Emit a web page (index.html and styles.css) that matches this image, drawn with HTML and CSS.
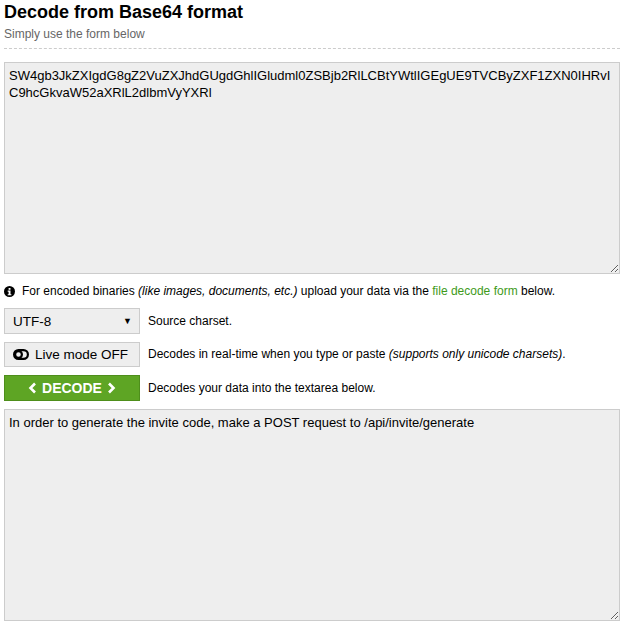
FILE: index.html
```html
<!DOCTYPE html>
<html>
<head>
<meta charset="utf-8">
<link rel="stylesheet" href="styles.css">
</head>
<body>
<div class="page">
  <h1 class="title">Decode from Base64 format</h1>
  <p class="subtitle">Simply use the form below</p>
  <div class="sep"></div>
  <textarea class="area area-in">SW4gb3JkZXIgdG8gZ2VuZXJhdGUgdGhlIGludml0ZSBjb2RlLCBtYWtlIGEgUE9TVCByZXF1ZXN0IHRvIC9hcGkvaW52aXRlL2dlbmVyYXRl</textarea>
  <p class="info">
    <svg class="info-icon" width="11" height="11" viewBox="0 0 11 11"><circle cx="5.5" cy="5.5" r="5.5" fill="#000"/><rect x="4.6" y="2" width="1.9" height="1.8" fill="#fff"/><path d="M3.7 4.6h2.8v3.6h0.9v1.1H3.7V8.2h0.9V5.7h-0.9z" fill="#fff"/></svg>
    <span>For encoded binaries <em>(like images, documents, etc.)</em> upload your data via the <a class="link" href="#">file decode form</a> below.</span>
  </p>
  <div class="rows">
    <div class="row">
      <div class="ctrl select"><span>UTF-8</span><span class="arrow">▼</span></div>
      <span class="label">Source charset.</span>
    </div>
    <div class="row">
      <div class="ctrl live">
        <svg width="16" height="11" viewBox="0 0 16 11"><rect x="1.1" y="1.1" width="13.8" height="8.8" rx="4.4" fill="none" stroke="#000" stroke-width="2.2"/><circle cx="5.5" cy="5.5" r="3.4" fill="#eee" stroke="#000" stroke-width="2.2"/></svg>
        <span>Live mode OFF</span>
      </div>
      <span class="label">Decodes in real-time when you type or paste <em>(supports only unicode charsets)</em>.</span>
    </div>
    <div class="row">
      <div class="ctrl decode">
        <svg width="9" height="12" viewBox="0 0 9 12"><path d="M7 1.5L2.5 6L7 10.5" fill="none" stroke="#fff" stroke-width="2.6"/></svg>
        <span>DECODE</span>
        <svg width="9" height="12" viewBox="0 0 9 12"><path d="M2 1.5L6.5 6L2 10.5" fill="none" stroke="#fff" stroke-width="2.6"/></svg>
      </div>
      <span class="label">Decodes your data into the textarea below.</span>
    </div>
  </div>
  <textarea class="area area-out">In order to generate the invite code, make a POST request to /api/invite/generate</textarea>
</div>
</body>
</html>
```
FILE: styles.css
```css
html, body {
  margin: 0;
  padding: 0;
  background: #fff;
}
body {
  font-family: "Liberation Sans", Arial, sans-serif;
  color: #000;
}
.page {
  width: 616px;
  padding: 0 0 0 4px;
}
.title {
  margin: 0;
  padding-top: 1px;
  font-size: 18px;
  line-height: 22px;
  font-weight: bold;
}
.subtitle {
  margin: 4px 0 0;
  font-size: 12px;
  line-height: 14px;
  color: #666;
}
.sep {
  margin-top: 7px;
  border-top: 1px dashed #ccc;
}
.area {
  display: block;
  box-sizing: border-box;
  width: 616px;
  height: 212px;
  margin: 0;
  padding: 4px 4px;
  background: #eee;
  border: 1px solid #ccc;
  font-family: "Liberation Sans", Arial, sans-serif;
  font-size: 13px;
  line-height: 17px;
  color: #000;
  resize: both;
  outline: none;
}
.area-in {
  margin-top: 13px;
}
.info {
  margin: 10px 0 0;
  display: flex;
  align-items: center;
  gap: 7px;
  font-size: 12px;
  line-height: 15px;
}
.info-icon {
  flex: none;
}
.link {
  color: #3e9a1a;
  text-decoration: none;
}
.rows {
  margin-top: 9px;
  display: flex;
  flex-direction: column;
  gap: 8px;
}
.row {
  display: flex;
  align-items: center;
  gap: 8px;
  font-size: 12px;
}
.ctrl {
  box-sizing: border-box;
  width: 136px;
  height: 26px;
  display: flex;
  align-items: center;
  font-size: 13.5px;
  border: 1px solid #ccc;
  background: #eee;
}
.select {
  justify-content: space-between;
  padding: 0 7px 0 8px;
}
.arrow {
  font-size: 9px;
}
.live {
  padding-left: 8px;
  gap: 6px;
  height: 25px;
}
.decode {
  justify-content: center;
  gap: 5px;
  background: #5ea524;
  border-color: #4e8e1b;
  color: #fff;
  font-weight: bold;
  font-size: 14px;
  height: 26px;
}
.label {
  line-height: 15px;
}
.area-out {
  margin-top: 8px;
}
```
